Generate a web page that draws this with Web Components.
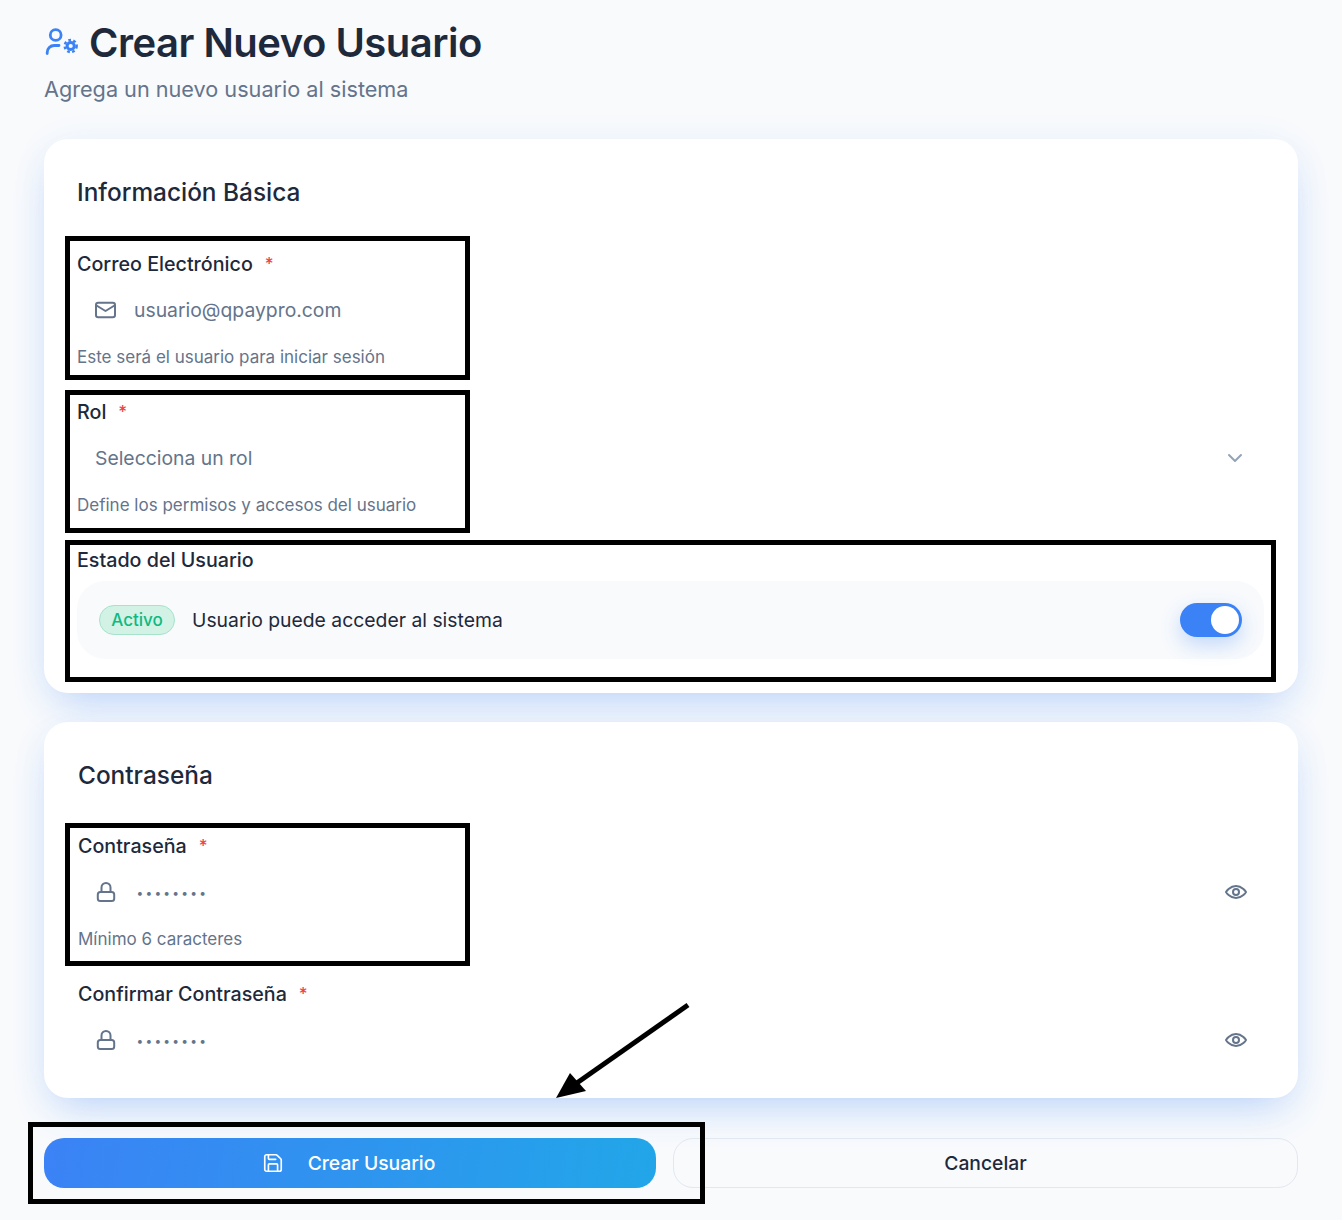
<!DOCTYPE html>
<html lang="es"><head><meta charset="utf-8"><title>Crear Nuevo Usuario</title>
<style>
html,body{margin:0;padding:0;background:#f8fafc;font-family:Inter,"Liberation Sans",sans-serif;color:#1e293b}
body{height:1220px;overflow:hidden;position:relative}
</style></head><body>
<user-form-page>
  <page-header title="Crear Nuevo Usuario" subtitle="Agrega un nuevo usuario al sistema"></page-header>
  <form-card heading="Información Básica" style="--pl:33px;--card-h:554px;--hgap:39px;--il:17px;--ig:16px">
    <form-field label="Correo Electrónico" required helper="Este será el usuario para iniciar sesión">
      <text-input icon="mail" value="usuario@qpaypro.com"></text-input>
    </form-field>
    <form-field label="Rol" required helper="Define los permisos y accesos del usuario">
      <text-input value="Selecciona un rol" trailing="chevron" plain></text-input>
    </form-field>
    <form-field label="Estado del Usuario" last>
      <status-row badge="Activo" text="Usuario puede acceder al sistema"></status-row>
    </form-field>
  </form-card>
  <form-card heading="Contraseña" style="--pl:34px;--card-h:376px;--mt:29px;--hgap:38px;--il:16px;--ig:17px">
    <form-field label="Contraseña" required helper="Mínimo 6 caracteres">
      <text-input icon="lock" value="••••••••" password trailing="eye"></text-input>
    </form-field>
    <form-field label="Confirmar Contraseña" required last>
      <text-input icon="lock" value="••••••••" password trailing="eye"></text-input>
    </form-field>
  </form-card>
  <form-actions primary="Crear Usuario" secondary="Cancelar"></form-actions>
</user-form-page>
<annotation-layer></annotation-layer>

<script>
const ICONS={
 mail:'<rect x="2" y="4.800" width="19" height="14.400" rx="2.200"/><path d="M2.500 7.500 11.500 13l9-5.500"/>',
 lock:'<rect x="3.800" y="12" width="16.400" height="9" rx="2.500"/><path d="M7.500 12V7.500a4.500 4.500 0 0 1 9 0V12"/>',
 eye:'<path d="M2 12s3.600-6 10-6 10 6 10 6-3.600 6-10 6-10-6-10-6Z"/><circle cx="12" cy="12" r="3"/>',
 chevron:'<path d="m6 9 6 6 6-6"/>',
 save:'<path d="M15.200 3a2 2 0 0 1 1.400.6l3.800 3.800a2 2 0 0 1 .6 1.400V19a2 2 0 0 1-2 2H5a2 2 0 0 1-2-2V5a2 2 0 0 1 2-2z"/><path d="M17 21v-7a1 1 0 0 0-1-1H8a1 1 0 0 0-1 1v7"/><path d="M7 3v4a1 1 0 0 0 1 1h7"/>'
};
class AppIcon extends HTMLElement{connectedCallback(){
 const s=this.getAttribute('size')||24,c=this.getAttribute('color')||'#64748b',w=this.getAttribute('stroke')||2;
 this.attachShadow({mode:'open'}).innerHTML=`<style>:host{display:inline-flex;flex:none}svg{display:block}</style>
 <svg width="${s}" height="${s}" viewBox="0 0 24 24" fill="none" stroke="${c}" stroke-width="${w}" stroke-linecap="round" stroke-linejoin="round">${ICONS[this.getAttribute('name')]||''}</svg>`;
}}
customElements.define('app-icon',AppIcon);

class UserFormPage extends HTMLElement{constructor(){super();this.attachShadow({mode:'open'}).innerHTML=`<style>:host{display:block;padding:0 44px}</style><slot></slot>`}}
customElements.define('user-form-page',UserFormPage);

class PageHeader extends HTMLElement{connectedCallback(){
 this.attachShadow({mode:'open'}).innerHTML=`<style>
 :host{display:block;height:139px;box-sizing:border-box;padding-top:18px}
 .t{display:flex;align-items:center;gap:11px;height:50px}
 h1{margin:0;font:600 40px/50px Inter,sans-serif;color:#1e293b;letter-spacing:-.5px}
 svg{display:block;flex:none}
 p{margin:6px 0 0;font:400 21.650px/30px Inter,sans-serif;color:#64748b}
 </style>
 <div class="t"><svg width="34" height="30" viewBox="0 0 34 30" fill="none" stroke="#3b82f6" stroke-width="2.800" stroke-linecap="round"><circle cx="11.700" cy="7" r="5.400"/><path d="M3.200 25.500V24.500A7 7 0 0 1 10.200 17.500H15"/><circle cx="26.700" cy="18" r="3.600" stroke-width="3"/><circle cx="26.700" cy="18" r="6" stroke-width="2.400" stroke-linecap="butt" stroke-dasharray="2.700 2.330"/></svg>
 <h1>${this.getAttribute('title')}</h1></div><p>${this.getAttribute('subtitle')}</p>`;
}}
customElements.define('page-header',PageHeader);

class FormCard extends HTMLElement{connectedCallback(){
 this.attachShadow({mode:'open'}).innerHTML=`<style>
 :host{display:block;box-sizing:border-box;background:#fff;border-radius:24px;height:var(--card-h);margin-top:var(--mt,0);padding:34px 34px 34px var(--pl);box-shadow:0 18px 40px -12px rgba(59,130,246,.32),0 4px 40px rgba(59,130,246,.05)}
 h2{margin:0 0 var(--hgap);font:500 24.400px/38px Inter,sans-serif;color:#1e293b}
 </style><h2>${this.getAttribute('heading')}</h2><slot></slot>`;
}}
customElements.define('form-card',FormCard);

class FormField extends HTMLElement{connectedCallback(){
 const h=this.getAttribute('helper');
 this.attachShadow({mode:'open'}).innerHTML=`<style>
 :host{display:block;margin-bottom:29px}
 :host([last]){margin-bottom:0}
 label{display:flex;height:28px;align-items:center;font:500 19.700px/28px Inter,sans-serif;color:#1e293b}
 i{font-style:normal;color:#ef4444;margin-left:12px;font-size:17px;position:relative}
 .c{margin-top:7px}
 .h{margin-top:10px;font:400 17px/24px Inter,sans-serif;color:#64748b}
 </style><label>${this.getAttribute('label')}${this.hasAttribute('required')?'<i>*</i>':''}</label>
 <div class="c"><slot></slot></div>${h?`<div class="h">${h}</div>`:''}`;
}}
customElements.define('form-field',FormField);

class TextInput extends HTMLElement{connectedCallback(){
 const ic=this.getAttribute('icon'),tr=this.getAttribute('trailing'),pw=this.hasAttribute('password');
 this.attachShadow({mode:'open'}).innerHTML=`<style>
 :host{display:flex;align-items:center;height:50px;padding:0 16px 0 ${ic?'var(--il)':'18px'};box-sizing:border-box;font:400 19.350px/28px Inter,sans-serif;color:#64748b}
 .ic{margin-right:var(--ig)}
 .v{flex:1}
 .pw{font-size:12px;letter-spacing:2.200px;color:#64748b;margin-left:1.500px;position:relative;top:1px}
 .chev{margin-right:1px}
 </style>${ic?`<app-icon class="ic" name="${ic}"></app-icon>`:''}
 <span class="v${pw?' pw':''}">${this.getAttribute('value')}</span>
 ${tr?`<app-icon class="${tr==='chevron'?'chev':'eye'}" name="${tr}" color="${tr==='eye'?'#64748b':'#94a3b8'}"></app-icon>`:''}`;
}}
customElements.define('text-input',TextInput);

class StatusRow extends HTMLElement{connectedCallback(){
 this.attachShadow({mode:'open'}).innerHTML=`<style>
 :host{display:flex;align-items:center;height:78px;box-sizing:border-box;padding:0 22px;background:#f8fafc;border-radius:28px}
 .b{box-sizing:border-box;height:30px;width:76px;justify-content:center;display:flex;align-items:center;border-radius:15px;background:#d1f2e5;border:1px solid #a7e3cb;color:#10b981;font:500 17px/24px Inter,sans-serif}
 .t{margin-left:17px;flex:1;font:400 19.350px/28px Inter,sans-serif;color:#1e293b}
 .s{width:62px;height:34px;box-sizing:border-box;padding:3px;border-radius:17px;background:#3b82f6;box-shadow:0 8px 20px rgba(59,130,246,.28);display:flex;justify-content:flex-end}
 .k{width:28px;height:28px;border-radius:50%;background:#fff}
 </style><span class="b">${this.getAttribute('badge')}</span><span class="t">${this.getAttribute('text')}</span><span class="s"><span class="k"></span></span>`;
}}
customElements.define('status-row',StatusRow);

class FormActions extends HTMLElement{connectedCallback(){
 this.attachShadow({mode:'open'}).innerHTML=`<style>
 :host{display:grid;grid-template-columns:612fr 625fr;gap:17px;margin-top:40px;height:50px}
 button{font:500 19.300px/28px Inter,sans-serif;border-radius:20px;display:flex;align-items:center;justify-content:center;gap:24px;padding:0;cursor:pointer}
 .p{background:linear-gradient(100deg,#3b82f6,#22a6e8);color:#fff;border:0}
 .p app-icon{margin-left:-3px}
 .s{background:transparent;color:#1e293b;border:1px solid #e2e8f0}
 </style><button class="p"><app-icon name="save" size="22" color="#fff" stroke="1.800"></app-icon>${this.getAttribute('primary')}</button><button class="s">${this.getAttribute('secondary')}</button>`;
}}
customElements.define('form-actions',FormActions);

class AnnotationLayer extends HTMLElement{connectedCallback(){
 const boxes=[[65,236,405,144],[65,390,405,143],[65,540,1211,142],[65,823,405,143],[28,1122,677,82]];
 this.attachShadow({mode:'open'}).innerHTML=`<style>
 :host{position:absolute;inset:0;pointer-events:none}
 div{position:absolute;box-sizing:border-box;border:5px solid #000}
 svg{position:absolute;left:0;top:0}
 </style>${boxes.map(b=>`<div style="left:${b[0]}px;top:${b[1]}px;width:${b[2]}px;height:${b[3]}px"></div>`).join('')}
 <svg width="1342" height="1220"><path d="M688 1005 574 1085" stroke="#000" stroke-width="5" fill="none"/><path d="M556 1098 570 1073 586 1091Z" fill="#000"/></svg>`;
}}
customElements.define('annotation-layer',AnnotationLayer);
</script>
</body></html>
